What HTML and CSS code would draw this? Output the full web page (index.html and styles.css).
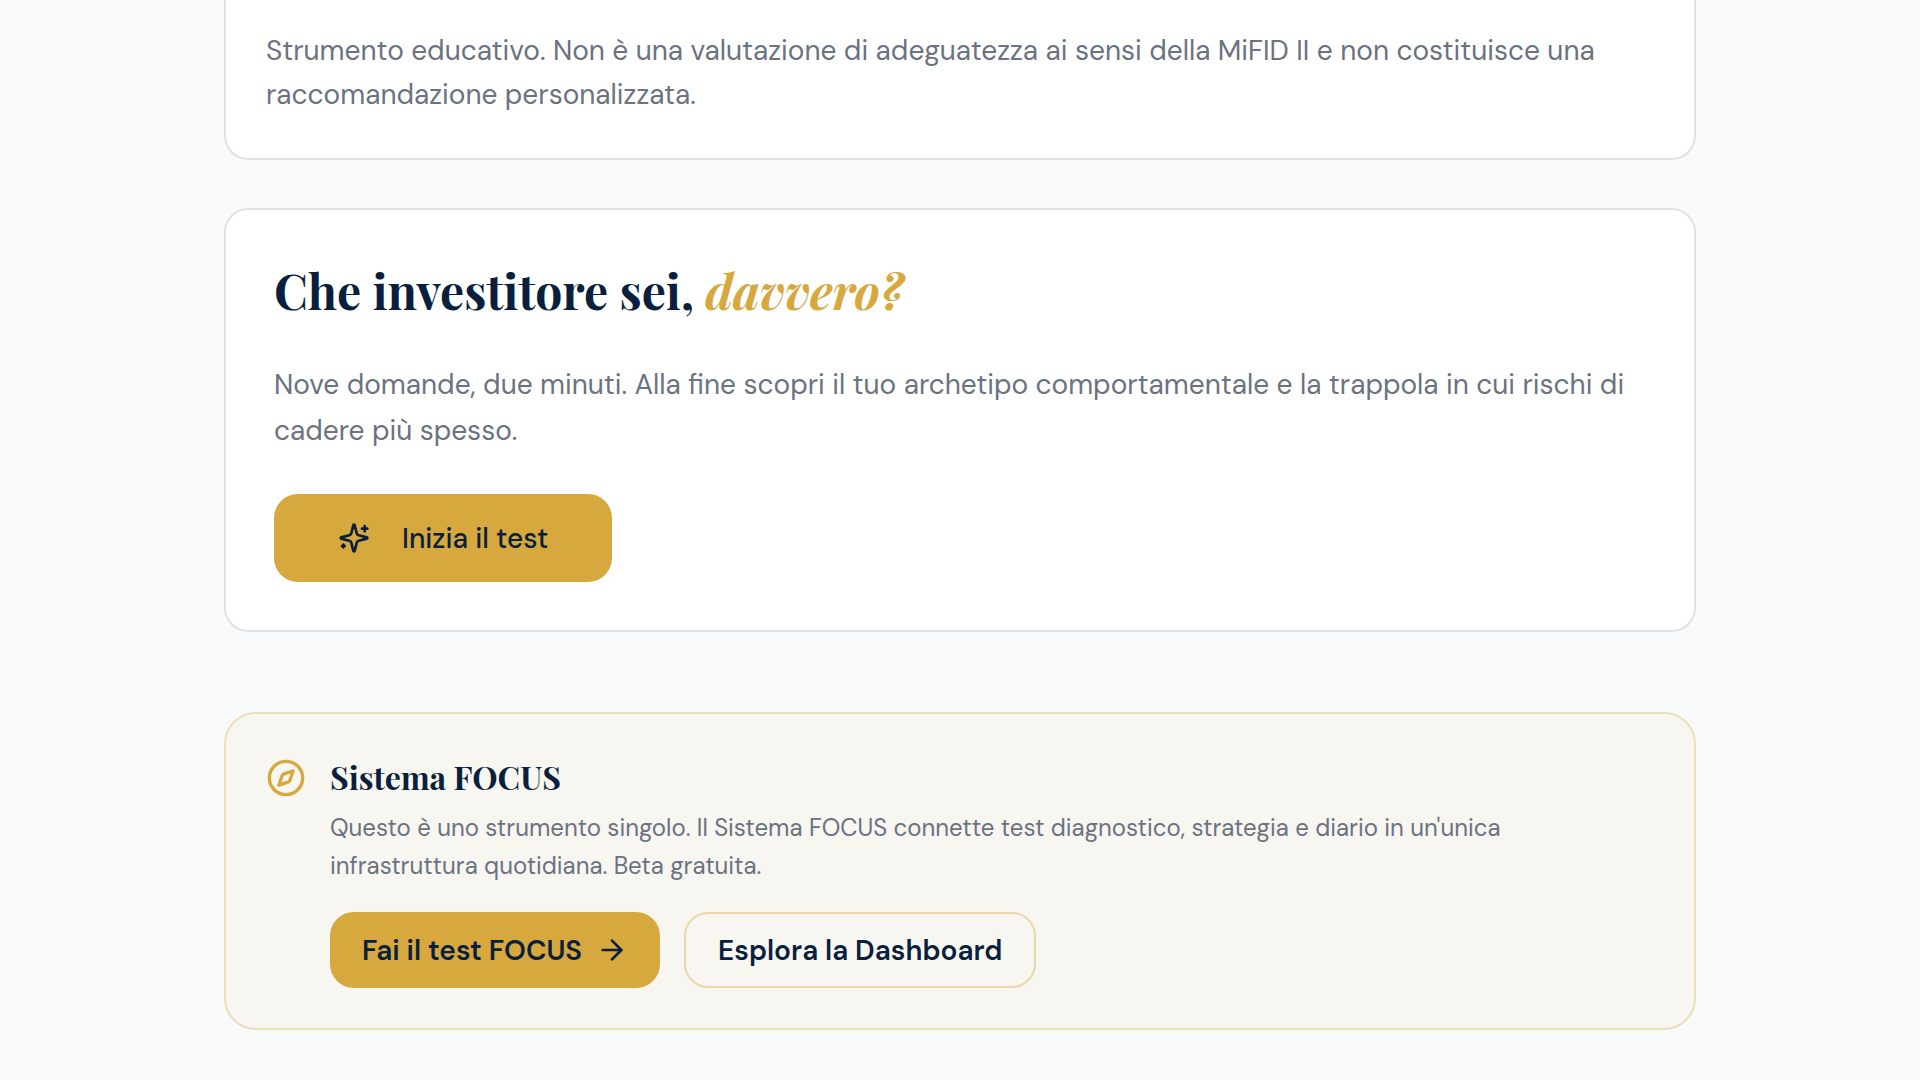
FILE: index.html
```
<!DOCTYPE html>
<html lang="it">
<head>
  <meta charset="utf-8">
  <meta name="viewport" content="width=device-width, initial-scale=1">
  <title>Sistema FOCUS</title>
  <link rel="stylesheet" href="styles.css">
</head>
<body>
  <main class="container">
    <section class="card card-note">
      <p class="text note">Strumento educativo. Non è una valutazione di adeguatezza ai sensi della MiFID II e non costituisce una raccomandazione personalizzata.</p>
    </section>

    <section class="card card-test">
      <h2>Che investitore sei, <em>davvero?</em></h2>
      <p class="text">Nove domande, due minuti. Alla fine scopri il tuo archetipo comportamentale e la trappola in cui rischi di cadere più spesso.</p>
      <button type="button" class="btn btn-start">
        <svg class="icon" viewBox="0 0 24 24" aria-hidden="true">
          <path d="M9.937 15.5A2 2 0 0 0 8.5 14.063l-6.135-1.582a.5.5 0 0 1 0-.962L8.5 9.936A2 2 0 0 0 9.937 8.5l1.582-6.135a.5.5 0 0 1 .963 0L14.063 8.5A2 2 0 0 0 15.5 9.937l6.135 1.581a.5.5 0 0 1 0 .964L15.5 14.063a2 2 0 0 0-1.437 1.437l-1.582 6.135a.5.5 0 0 1-.963 0z"/>
          <path d="M20 3v4"/>
          <path d="M22 5h-4"/>
          <path d="M4 17v2"/>
          <path d="M5 18H3"/>
        </svg>
        Inizia il test
      </button>
    </section>

    <section class="card card-focus">
      <svg class="icon icon-compass" viewBox="0 0 24 24" aria-hidden="true">
        <circle cx="12" cy="12" r="10"/>
        <path d="m16.24 7.76-1.804 5.411a2 2 0 0 1-1.265 1.265L7.76 16.24l1.804-5.411a2 2 0 0 1 1.265-1.265z"/>
      </svg>
      <div class="focus-body">
        <h3>Sistema FOCUS</h3>
        <p class="text small">Questo è uno strumento singolo. Il Sistema FOCUS connette test diagnostico, strategia e diario in un'unica infrastruttura quotidiana. Beta gratuita.</p>
        <div class="actions">
          <a href="#" class="btn btn-gold">
            Fai il test FOCUS
            <svg class="icon" viewBox="0 0 24 24" aria-hidden="true">
              <path d="M5 12h14"/>
              <path d="m12 5 7 7-7 7"/>
            </svg>
          </a>
          <a href="#" class="btn btn-outline">Esplora la Dashboard</a>
        </div>
      </div>
    </section>
  </main>
</body>
</html>
```
FILE: styles.css
```
* {
  box-sizing: border-box;
}

body {
  margin: 0;
  background-color: #f9fafc;
  color: #0a1f3d;
  font-family: "DM Sans", Inter, "Open Sans", sans-serif;
  font-size: 28px;
}

.container {
  max-width: 1536px;
  margin: 0 auto;
  padding: 0 32px 48px;
}

.card {
  background-color: #fff;
  border: 2px solid #e1e1df;
  border-radius: 24px;
}

.card-note {
  border-top: none;
  border-radius: 0 0 24px 24px;
  padding: 29px 40px 41px;
}

.card-test {
  margin-top: 48px;
  padding: 48px;
}

.card-focus {
  display: flex;
  gap: 24px;
  margin-top: 80px;
  padding: 40px;
  background-color: #f7f6f1;
  border-color: #ebdfb9;
  border-radius: 32px;
}

h2,
h3 {
  margin: 0;
  font-family: "Playfair Display", "Liberation Serif", serif;
  font-weight: 700;
}

h2 {
  margin-bottom: 40px;
  font-size: 48px;
  line-height: 64px;
}

h2 em {
  color: #d6a83e;
}

h3 {
  font-size: 32px;
  line-height: 46px;
}

.text {
  margin: 0;
  color: #6b7280;
  line-height: 46px;
}

.note {
  line-height: 44px;
}

.small {
  margin-top: 9px;
  font-size: 24px;
  line-height: 38px;
}

.icon {
  flex: none;
  width: 32px;
  height: 32px;
  fill: none;
  stroke: currentColor;
  stroke-width: 2;
  stroke-linecap: round;
  stroke-linejoin: round;
}

.icon-compass {
  width: 40px;
  height: 40px;
  margin-top: 4px;
  color: #d6a83e;
}

.focus-body {
  flex: 1;
}

.actions {
  display: flex;
  flex-wrap: wrap;
  gap: 24px;
  margin-top: 27px;
}

.btn {
  display: inline-flex;
  align-items: center;
  gap: 14px;
  height: 76px;
  padding: 0 32px;
  border: 2px solid transparent;
  border-radius: 24px;
  color: #0a1f3d;
  font-family: inherit;
  font-size: 28px;
  font-weight: 600;
  text-decoration: none;
  cursor: pointer;
}

.btn-start {
  gap: 32px;
  height: 88px;
  margin-top: 40px;
  padding: 0 64px;
  border: none;
  background-color: #d6a83e;
  font-weight: 500;
}

.btn-gold {
  border: none;
  background-color: #d6a83e;
}

.btn-outline {
  border-color: #ebd7a9;
}
```
